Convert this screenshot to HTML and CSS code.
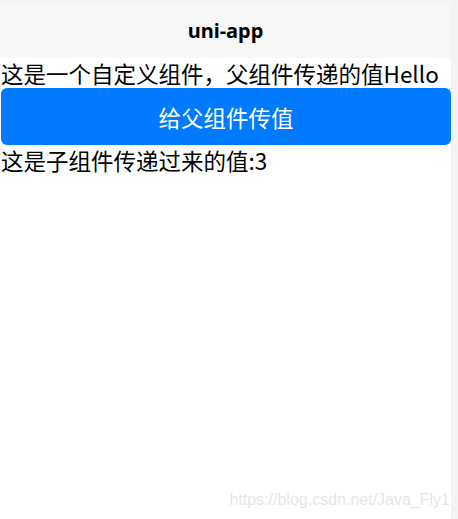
FILE: index.html
```html
<!DOCTYPE html>
<html lang="zh-CN">
<head>
<meta charset="utf-8">
<title>uni-app</title>
<link rel="stylesheet" href="styles.css">
</head>
<body>
<div class="page">
  <header class="nav">uni-app</header>
  <div class="line">这是一个自定义组件，父组件传递的值Hello</div>
  <button class="btn">给父组件传值</button>
  <div class="line">这是子组件传递过来的值:3</div>
  <div class="watermark">https://blog.csdn.net/Java_Fly1</div>
</div>
</body>
</html>
```
FILE: styles.css
```css
html, body {
  margin: 0;
  padding: 0;
}
body {
  background: #f3f3f3;
  height: 519px;
  overflow: hidden;
  font-family: "Noto Sans CJK SC", "Noto Sans", sans-serif;
  color: #000;
}
.page {
  position: relative;
  margin-top: 3px;
  width: 451px;
  height: 516px;
  background: #fff;
  display: flex;
  flex-direction: column;
}
.nav {
  height: 55px;
  background: #f7f7f7;
  display: flex;
  align-items: center;
  justify-content: center;
  font-family: "Noto Sans", "Open Sans", sans-serif;
  font-weight: 700;
  font-size: 20px;
}
.line {
  font-size: 22.5px;
  line-height: 30px;
  height: 30px;
  white-space: nowrap;
  padding-left: 1px;
}
.btn {
  margin: 0 0 0 1px;
  width: 450px;
  height: 57px;
  border: none;
  border-radius: 6px;
  background: #007aff;
  color: #fff;
  font-family: "Noto Sans CJK SC", sans-serif;
  font-size: 22.5px;
  padding: 0;
  display: flex;
  align-items: center;
  justify-content: center;
}
.watermark {
  position: absolute;
  right: 1px;
  bottom: 10px;
  font-family: "Liberation Sans", Arial, sans-serif;
  font-size: 16px;
  color: #e6e6e6;
}
```
